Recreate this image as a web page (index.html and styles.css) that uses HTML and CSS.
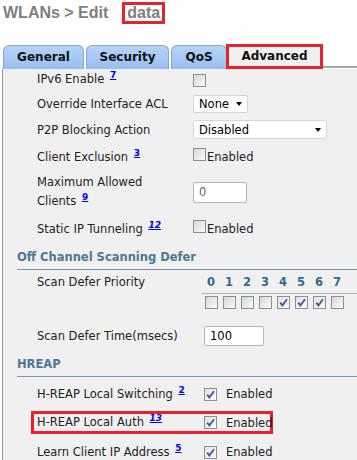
FILE: index.html
```html
<!DOCTYPE html>
<html lang="en">
  <head>
    <meta charset="UTF-8">
    <meta name="viewport" content="width=device-width, initial-scale=1.0">
    <title>WLANs &gt; Edit</title>
    <link rel="stylesheet" href="styles.css">
  </head>
  <body>
    <div class="page-title">
      <span>WLANs &gt; Edit</span>
      <span class="wlan-name">data</span>
    </div>

    <div class="tabs">
      <div class="tab">General</div>
      <div class="tab tab-security">Security</div>
      <div class="tab tab-qos">QoS</div>
      <div class="tab tab-active">Advanced</div>
      <div class="tab-rest"></div>
    </div>

    <div class="panel">
      <div class="field f-ipv6">
        <div class="label">IPv6 Enable <a class="note">7</a></div>
        <div><span class="cb"></span></div>
      </div>
      <div class="field f-acl">
        <div class="label">Override Interface ACL</div>
        <div><span class="select sel-acl">None<i class="caret"></i></span></div>
      </div>
      <div class="field f-p2p">
        <div class="label">P2P Blocking Action</div>
        <div><span class="select sel-p2p">Disabled<i class="caret"></i></span></div>
      </div>
      <div class="field f-excl">
        <div class="label">Client Exclusion <a class="note">3</a></div>
        <div class="check"><span class="cb cb-up"></span>Enabled</div>
      </div>
      <div class="field f-max">
        <div class="label two-line">Maximum Allowed<br>Clients <a class="note">9</a></div>
        <div><span class="textbox tb-max">0</span></div>
      </div>
      <div class="field f-tunnel">
        <div class="label">Static IP Tunneling <a class="note note-i">12</a></div>
        <div class="check"><span class="cb cb-up"></span>Enabled</div>
      </div>

      <div class="section">Off Channel Scanning Defer</div>

      <div class="wide priority">
        <div class="label">Scan Defer Priority</div>
        <div class="prio-grid">
          <div class="prio-nums">
            <span>0</span><span>1</span><span>2</span><span>3</span>
            <span>4</span><span>5</span><span>6</span><span>7</span>
          </div>
          <div class="prio-boxes">
            <span><span class="cb"></span></span>
            <span><span class="cb"></span></span>
            <span><span class="cb"></span></span>
            <span><span class="cb"></span></span>
            <span><span class="cb on"><svg viewBox="0 0 11 11"><path d="M2.2 5.6 L4.4 8.4 L9 2.2"/></svg></span></span>
            <span><span class="cb on"><svg viewBox="0 0 11 11"><path d="M2.2 5.6 L4.4 8.4 L9 2.2"/></svg></span></span>
            <span><span class="cb on"><svg viewBox="0 0 11 11"><path d="M2.2 5.6 L4.4 8.4 L9 2.2"/></svg></span></span>
            <span><span class="cb"></span></span>
          </div>
        </div>
      </div>
      <div class="wide f-time">
        <div class="label">Scan Defer Time(msecs)</div>
        <div><span class="textbox tb-time">100</span></div>
      </div>

      <div class="section">HREAP</div>

      <div class="wide f-switch">
        <div class="label">H-REAP Local Switching <a class="note">2</a></div>
        <div class="check spaced"><span class="cb on"><svg viewBox="0 0 11 11"><path d="M2.2 5.6 L4.4 8.4 L9 2.2"/></svg></span>Enabled</div>
      </div>
      <div class="wide f-auth">
        <div class="label">H-REAP Local Auth <a class="note note-i">13</a></div>
        <div class="check spaced"><span class="cb on"><svg viewBox="0 0 11 11"><path d="M2.2 5.6 L4.4 8.4 L9 2.2"/></svg></span>Enabled</div>
      </div>
      <div class="wide f-learn">
        <div class="label">Learn Client IP Address <a class="note">5</a></div>
        <div class="check spaced"><span class="cb on"><svg viewBox="0 0 11 11"><path d="M2.2 5.6 L4.4 8.4 L9 2.2"/></svg></span>Enabled</div>
      </div>
    </div>
  </body>
</html>
```

FILE: styles.css
```css
body {
    margin: 0;
    background: #fff;
    font-family: "DejaVu Sans", Verdana, sans-serif;
    font-size: 11.5px;
    color: #222;
    overflow: hidden;
}

/* title */
.page-title {
    display: flex;
    align-items: center;
    height: 26px;
    padding-left: 3px;
    font-family: "Liberation Sans", Arial, sans-serif;
    font-size: 16px;
    font-weight: bold;
    color: #7e7e7e;
}
.wlan-name {
    margin-left: 14px;
    padding: 0 2px;
    line-height: 16px;
    border: 3px solid #e8212b;
}

/* tabs */
.tabs {
    display: flex;
    align-items: flex-end;
    margin-top: 18px;
    height: 25px;
}
.tab {
    box-sizing: border-box;
    height: 24px;
    width: 81px;
    margin-left: 3px;
    border: 1px solid #8ba6c6;
    border-bottom: none;
    border-radius: 6px 6px 0 0;
    background: linear-gradient(#b6d3f7, #98bff0);
    font-size: 12px;
    font-weight: bold;
    color: #111;
    text-align: center;
    line-height: 23px;
}
.tab-security {
    width: 83px;
    margin-left: 2px;
}
.tab-qos {
    width: 56px;
    margin-left: 2px;
}
.tab-active {
    width: 97px;
    height: 25px;
    margin-left: -1px;
    border: 3px solid #e8212b;
    border-radius: 0;
    background: #f0f0f0;
    line-height: 19px;
}
.tab-rest {
    flex: 1;
    border-bottom: 2px solid #a6a6a6;
    margin-bottom: 1px;
}

/* panel */
.panel {
    margin-left: 2px;
    border-left: 1px solid #9c9c9c;
    background: #f0f0f0;
    padding-left: 14px;
    height: 400px;
}
.field, .wide {
    display: grid;
    grid-template-columns: 156px auto;
    align-items: center;
    padding-left: 20px;
}
.wide {
    grid-template-columns: 165px auto;
}
.label {
    line-height: 14px;
    white-space: nowrap;
}
.two-line {
    line-height: 18.5px;
}
.note {
    position: relative;
    top: -5px;
    margin-left: 2px;
    font-size: 9px;
    font-weight: bold;
    color: #0000ee;
    text-decoration: underline;
}
.note-i {
    font-style: italic;
}

.f-ipv6 { height: 21px; }
.f-acl { height: 28px; }
.f-p2p { height: 23px; }
.f-excl { height: 32px; }
.f-max { height: 38px; }
.f-tunnel { height: 36px; }

/* controls */
.cb {
    display: inline-block;
    box-sizing: border-box;
    width: 13px;
    height: 13px;
    border: 1px solid #8e8f8f;
    background: linear-gradient(135deg, #d6d6d6, #fafafa);
    vertical-align: middle;
}
.cb.on {
    background: linear-gradient(135deg, #e2e2e2, #fbfbfb);
}
.cb svg {
    display: block;
    width: 11px;
    height: 11px;
}
.cb path {
    fill: none;
    stroke: #3f5899;
    stroke-width: 1.8;
}
.cb-up {
    position: relative;
    top: -3px;
}
.check {
    display: flex;
    align-items: center;
    gap: 1px;
}
.check.spaced {
    gap: 9px;
    margin-left: 2px;
}
.select {
    box-sizing: border-box;
    display: flex;
    align-items: center;
    justify-content: space-between;
    height: 18px;
    padding: 0 5px;
    background: #fff;
    border: 1px solid #d6d6d6;
    border-radius: 2px;
    color: #000;
}
.sel-acl { width: 55px; }
.sel-p2p { width: 134px; height: 19px; }
.caret {
    width: 0;
    height: 0;
    border-left: 3.5px solid transparent;
    border-right: 3.5px solid transparent;
    border-top: 4px solid #000;
}
.textbox {
    box-sizing: border-box;
    display: flex;
    align-items: center;
    background: #fff;
    border: 1px solid #b5b5b5;
    border-radius: 2px;
    padding-left: 5px;
}
.tb-max {
    width: 54px;
    height: 21px;
    color: #666;
}
.tb-time {
    width: 60px;
    height: 20px;
    margin-left: 2px;
    color: #000;
}

/* sections */
.section {
    padding: 3px 0 5px;
    line-height: 14px;
    font-weight: bold;
    color: #4b7896;
    border-bottom: 1px solid #7797ab;
}

/* scan defer priority */
.priority {
    align-items: start;
    padding-top: 5px;
}
.prio-nums, .prio-boxes {
    display: grid;
    grid-template-columns: repeat(8, 18px);
    text-align: center;
}
.prio-nums {
    line-height: 14px;
    padding-bottom: 4px;
    border-bottom: 1px solid #a9b8c2;
    font-weight: bold;
    color: #2f6b91;
}
.prio-boxes {
    padding-top: 2px;
    height: 13px;
}
.prio-boxes > span {
    display: flex;
    justify-content: center;
}
.f-time {
    height: 37px;
    margin-top: 8px;
}

/* hreap */
.f-switch { height: 34px; }
.f-auth {
    box-sizing: border-box;
    width: 242px;
    height: 23px;
    margin-left: 14px;
    padding-left: 3px;
    border: 3px solid #e8212b;
    grid-template-columns: 165px auto;
}
.f-learn { height: 36px; }
```
